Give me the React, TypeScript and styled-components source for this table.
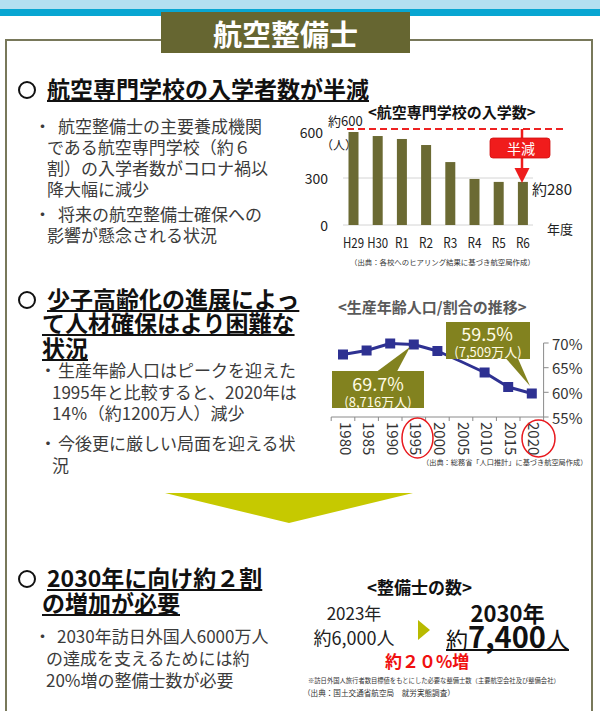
import React from "react";
import styled, { createGlobalStyle } from "styled-components";

const GlobalStyle = createGlobalStyle`
  html, body { margin: 0; padding: 0; background: #ffffff; }
  body { font-family: "Noto Sans CJK JP", "Noto Sans", sans-serif; }
  * { box-sizing: border-box; }
`;

const Page = styled.div`
  width: 600px;
  height: 711px;
  overflow: hidden;
  background: #ffffff;
`;

const TopBand = styled.div`
  height: 9px;
  background: #b3dff1;
`;

const BlueRule = styled.div`
  height: 7px;
  background: #08a6d2;
`;

const FrameArea = styled.div`
  position: relative;
  padding: 23px 0 0 5px;
`;

const TitleBox = styled.div`
  position: absolute;
  left: 161px;
  top: -4px;
  width: 249px;
  height: 41px;
  background: #666631;
  color: #ffffff;
  display: flex;
  align-items: center;
  justify-content: center;
  font-size: 29px;
  font-weight: 700;
  line-height: 1;
  padding-top: 1px;
`;

const Frame = styled.div`
  width: 588px;
  min-height: 720px;
  border: 2px solid #78785a;
  border-bottom: none;
`;

const TwoCol = styled.div`
  display: grid;
  grid-template-columns: 293px 291px;
  align-items: start;
`;

const Column = styled.div<{ $pt?: number }>`
  padding-top: ${(p) => p.$pt ?? 0}px;
  min-width: 0;
`;

const Heading = styled.h2<{ $mt: number }>`
  margin: ${(p) => p.$mt}px 0 0;
  padding-left: 35px;
  font-size: 23px;
  line-height: 24.5px;
  font-weight: 700;
  color: #111111;
  white-space: nowrap;
  text-decoration: underline;
  text-decoration-thickness: 2px;
  text-underline-offset: 2px;
`;

const Circle = styled.span`
  display: inline-block;
  width: 18px;
  height: 18px;
  margin: 0 11px 0 -24px;
  border: 2.6px solid #111111;
  border-radius: 50%;
  vertical-align: -1px;
`;

const Bullets = styled.div<{ $mt: number; $pl: number; $lh: number }>`
  margin-top: ${(p) => p.$mt}px;
  padding-left: ${(p) => p.$pl}px;
  font-size: 17px;
  line-height: ${(p) => p.$lh}px;
  color: #3b3b3b;
  white-space: nowrap;
`;

const Item = styled.p<{ $indent: number; $gap?: number }>`
  margin: ${(p) => p.$gap ?? 0}px 0 0;
  text-indent: ${(p) => p.$indent}px;
`;

const Dot = styled.span<{ $w: number }>`
  display: inline-block;
  width: ${(p) => p.$w}px;
  text-indent: 0;
`;

const ChartTitle = styled.div<{ $pl: number; $color: string; $mb?: number }>`
  padding-left: ${(p) => p.$pl}px;
  margin-bottom: ${(p) => p.$mb ?? 0}px;
  font-size: 15px;
  font-weight: 700;
  line-height: 18px;
  color: ${(p) => p.$color};
  white-space: nowrap;
`;

const ChartSvg = styled.svg`
  display: block;
  overflow: visible;
  font-family: "Noto Sans CJK JP", "Noto Sans", sans-serif;
`;

const Note = styled.div<{ $pl: number; $size: number; $lh: number; $mt?: number }>`
  margin-top: ${(p) => p.$mt ?? 0}px;
  padding-left: ${(p) => p.$pl}px;
  font-size: ${(p) => p.$size}px;
  line-height: ${(p) => p.$lh}px;
  color: #333333;
  white-space: nowrap;
`;

const DownArrow = styled.div`
  margin: 18px 0 0 158px;
  width: 0;
  height: 0;
  border-left: 124.5px solid transparent;
  border-right: 124.5px solid transparent;
  border-top: 30px solid #c6c900;
`;

const Panel = styled.div`
  margin-top: 53px;
`;

const PanelTitle = styled.div`
  padding-left: 67px;
  font-size: 17px;
  font-weight: 700;
  line-height: 22px;
  color: #111111;
  white-space: nowrap;
`;

const CountRow = styled.div`
  display: flex;
  align-items: flex-start;
`;

const CountGroup = styled.div<{ $w: number }>`
  flex: none;
  width: ${(p) => p.$w}px;
  padding-top: 2px;
  text-align: center;
  color: #222222;
  white-space: nowrap;
`;

const CountLine = styled.div<{ $size: number; $lh: number; $bold?: boolean }>`
  font-size: ${(p) => p.$size}px;
  line-height: ${(p) => p.$lh}px;
  font-weight: ${(p) => (p.$bold ? 700 : 400)};
  color: ${(p) => (p.$bold ? "#111111" : "#222222")};
`;

const Chevron = styled.div`
  flex: none;
  margin: 22px 10px 0 10px;
  width: 0;
  height: 0;
  border-left: 12px solid #b8ba00;
  border-top: 10px solid transparent;
  border-bottom: 10px solid transparent;
`;

const BigCount = styled.span`
  display: inline-block;
  line-height: 22px;
  border-bottom: 2px solid #111111;
  color: #111111;
`;

const BigPart = styled.span<{ $size: number; $bold?: boolean }>`
  font-size: ${(p) => p.$size}px;
  font-weight: ${(p) => (p.$bold ? 700 : 400)};
`;

const Increase = styled.div`
  padding-left: 85px;
  font-size: 17px;
  font-weight: 700;
  line-height: 20px;
  color: #f01010;
  white-space: nowrap;
`;

function IntakeChart() {
  const labels = ["H29", "H30", "R1", "R2", "R3", "R4", "R5", "R6"];
  const values = [600, 574, 555, 516, 406, 297, 278, 278];
  const base = 112;
  const scale = 0.155;
  return (
    <ChartSvg width={291} height={142} viewBox="0 0 291 142">
      <text x={28} y={7} fontSize={13} fill="#222" dominantBaseline="central">約600</text>
      <text x={23} y={19} fontSize={14} fill="#222" textAnchor="end" dominantBaseline="central">600</text>
      <text x={21} y={31} fontSize={12} fill="#222" dominantBaseline="central">（人）</text>
      <text x={28} y={65} fontSize={14} fill="#222" textAnchor="end" dominantBaseline="central">300</text>
      <text x={28} y={112} fontSize={14} fill="#222" textAnchor="end" dominantBaseline="central">0</text>
      <line x1={43} x2={233} y1={65} y2={65} stroke="#d4d4d4" strokeWidth={1} />
      <line x1={43} x2={233} y1={base} y2={base} stroke="#d4d4d4" strokeWidth={1} />
      {values.map((v, i) => {
        const cx = 53.5 + i * 24.2;
        const h = v * scale;
        return <rect key={labels[i]} x={cx - 5} y={base - h} width={10} height={h} fill="#6b6a33" />;
      })}
      <line x1={47} x2={263} y1={16} y2={16} stroke="#ee2222" strokeWidth={2} strokeDasharray="7 4" />
      <line x1={222} x2={222} y1={16} y2={57} stroke="#ee1c1c" strokeWidth={2.5} />
      <polygon points="214.5,55 229.5,55 222,70" fill="#ee1c1c" />
      <rect x={190} y={25} width={60} height={20} rx={3} fill="#f01c1c" stroke="#d01010" strokeWidth={0.8} />
      <text x={221} y={35} fontSize={14} fill="#ffffff" textAnchor="middle" dominantBaseline="central">半減</text>
      <text x={232} y={75} fontSize={15} fill="#222" dominantBaseline="central">約280</text>
      <text x={247} y={115} fontSize={13} fill="#222" dominantBaseline="central">年度</text>
      {labels.map((l, i) => (
        <text
          key={l}
          x={53.5 + i * 24.2}
          y={129}
          fontSize={14}
          fill="#222"
          textAnchor="middle"
          dominantBaseline="central"
          textLength={l.length === 3 ? 21 : 14}
          lengthAdjust="spacingAndGlyphs"
        >
          {l}
        </text>
      ))}
    </ChartSvg>
  );
}

function PopulationChart() {
  const years = ["1980", "1985", "1990", "1995", "2000", "2005", "2010", "2015", "2020"];
  const ys = [38.5, 34.5, 27.5, 28.5, 35, 45.5, 56.5, 71, 77.5];
  const xs = years.map((_, i) => 43 + i * 23.6);
  const pts = xs.map((x, i) => `${x},${ys[i]}`).join(" ");
  const axisLeft = 31.2;
  const axisRight = 243.6;
  const yTicks = [
    { y: 27, label: "70%" },
    { y: 51.7, label: "65%" },
    { y: 76.3, label: "60%" },
    { y: 101, label: "55%" },
  ];
  const navy = "#2e3192";
  const olive = "#82821f";
  const cream = "#fffbe4";
  return (
    <ChartSvg width={291} height={140} viewBox="0 0 291 140">
      <polyline points={pts} fill="none" stroke={navy} strokeWidth={3} strokeLinejoin="round" />
      {xs.map((x, i) =>
        i === 5 ? null : <rect key={years[i]} x={x - 5} y={ys[i] - 5} width={10} height={10} fill={navy} />
      )}
      <rect x={146} y={6} width={84} height={37} fill={olive} />
      <polygon points="206,42.5 218,42.5 230,70" fill={olive} />
      <text x={187} y={17} fontSize={18} fill={cream} textAnchor="middle" dominantBaseline="central">59.5%</text>
      <text x={188} y={35} fontSize={13} fill={cream} textAnchor="middle" dominantBaseline="central">(7,509万人)</text>
      <rect x={32} y={55} width={92} height={37} fill={olive} />
      <polygon points="77,55.5 97,55.5 110,31" fill={olive} />
      <text x={78} y={67} fontSize={18} fill={cream} textAnchor="middle" dominantBaseline="central">69.7%</text>
      <text x={78} y={85} fontSize={13} fill={cream} textAnchor="middle" dominantBaseline="central">(8,716万人)</text>
      <line x1={axisLeft} x2={axisRight} y1={101} y2={101} stroke="#8a8a8a" strokeWidth={1} />
      {Array.from({ length: 10 }).map((_, k) => (
        <line key={k} x1={axisLeft + k * 23.6} x2={axisLeft + k * 23.6} y1={101} y2={105} stroke="#8a8a8a" strokeWidth={1} />
      ))}
      <line x1={axisRight} x2={axisRight} y1={27} y2={101} stroke="#8a8a8a" strokeWidth={1} />
      {yTicks.map((t) => (
        <g key={t.label}>
          <line x1={axisRight} x2={axisRight + 5} y1={t.y} y2={t.y} stroke="#8a8a8a" strokeWidth={1} />
          <text x={252} y={t.y} fontSize={15} fill="#333" dominantBaseline="central">{t.label}</text>
        </g>
      ))}
      {years.map((yr, i) => (
        <text
          key={yr}
          transform={`translate(${xs[i] + 3},106) rotate(90)`}
          fontSize={15}
          fill="#333"
          dominantBaseline="central"
        >
          {yr}
        </text>
      ))}
      <ellipse cx={117.5} cy={122} rx={15.5} ry={20} fill="none" stroke="#e8191e" strokeWidth={1.5} />
      <ellipse cx={238.5} cy={122.5} rx={16.5} ry={18.5} fill="none" stroke="#e8191e" strokeWidth={1.5} />
    </ChartSvg>
  );
}

export default function App() {
  return (
    <Page>
      <GlobalStyle />
      <TopBand />
      <BlueRule />
      <FrameArea>
        <TitleBox>航空整備士</TitleBox>
        <Frame>
          <Heading $mt={35}>
            <Circle />航空専門学校の入学者数が半減
          </Heading>
          <TwoCol>
            <Column>
              <Bullets $mt={14} $pl={40} $lh={21}>
                <Item $indent={-13}>
                  <Dot $w={24}>・</Dot>航空整備士の主要養成機関
                  <br />
                  である航空専門学校（約６
                  <br />
                  割）の入学者数がコロナ禍以
                  <br />
                  降大幅に減少
                </Item>
                <Item $indent={-13} $gap={4}>
                  <Dot $w={24}>・</Dot>将来の航空整備士確保への
                  <br />
                  影響が懸念される状況
                </Item>
              </Bullets>
            </Column>
            <Column $pt={2.5}>
              <ChartTitle $pl={68} $color="#111111" $mb={-8}>
                &lt;航空専門学校の入学数&gt;
              </ChartTitle>
              <IntakeChart />
              <Note $pl={50} $size={7.4} $lh={14}>
                （出典：各校へのヒアリング結果に基づき航空局作成）
              </Note>
            </Column>
          </TwoCol>

          <TwoCol>
            <Column>
              <Heading $mt={16.75}>
                <Circle />少子高齢化の進展によっ
                <br />
                て人材確保はより困難な
                <br />
                状況
              </Heading>
              <Bullets $mt={0} $pl={45} $lh={21.5}>
                <Item $indent={-12.5}>
                  <Dot $w={18.5}>・</Dot>生産年齢人口はピークを迎えた
                  <br />
                  1995年と比較すると、2020年は
                  <br />
                  14％（約1200万人）減少
                </Item>
                <Item $indent={-12.5} $gap={8.5}>
                  <Dot $w={18.5}>・</Dot>今後更に厳しい局面を迎える状
                  <br />
                  況
                </Item>
              </Bullets>
            </Column>
            <Column $pt={29}>
              <ChartTitle $pl={38} $color="#595959">
                &lt;生産年齢人口/割合の推移&gt;
              </ChartTitle>
              <PopulationChart />
              <Note $pl={122} $size={7.2} $lh={12}>
                （出典：総務省「人口推計」に基づき航空局作成）
              </Note>
            </Column>
          </TwoCol>

          <DownArrow />

          <TwoCol>
            <Column>
              <Heading $mt={41.75}>
                <Circle />2030年に向け約２割
                <br />
                の増加が必要
              </Heading>
              <Bullets $mt={11} $pl={39} $lh={22}>
                <Item $indent={-12}>
                  <Dot $w={23}>・</Dot>2030年訪日外国人6000万人
                  <br />
                  の達成を支えるためには約
                  <br />
                  20%増の整備士数が必要
                </Item>
              </Bullets>
            </Column>
            <Column>
              <Panel>
                <PanelTitle>&lt;整備士の数&gt;</PanelTitle>
                <CountRow>
                  <CountGroup $w={108}>
                    <CountLine $size={17} $lh={26}>2023年</CountLine>
                    <CountLine $size={18} $lh={22}>約6,000人</CountLine>
                  </CountGroup>
                  <Chevron />
                  <CountGroup $w={135}>
                    <CountLine $size={22} $lh={24} $bold>2030年</CountLine>
                    <CountLine $size={22} $lh={22}>
                      <BigCount>
                        <BigPart $size={22}>約</BigPart>
                        <BigPart $size={29} $bold>7,400</BigPart>
                        <BigPart $size={23}>人</BigPart>
                      </BigCount>
                    </CountLine>
                  </CountGroup>
                </CountRow>
                <Increase>約２０%増</Increase>
                <Note $pl={8} $size={6.3} $lh={10} $mt={5}>
                  ※訪日外国人旅行者数目標値をもとにした必要な整備士数（主要航空会社及び整備会社）
                </Note>
                <Note $pl={3} $size={7.6} $lh={12} $mt={1}>
                  （出典：国土交通省航空局　就労実態調査）
                </Note>
              </Panel>
            </Column>
          </TwoCol>
        </Frame>
      </FrameArea>
    </Page>
  );
}
